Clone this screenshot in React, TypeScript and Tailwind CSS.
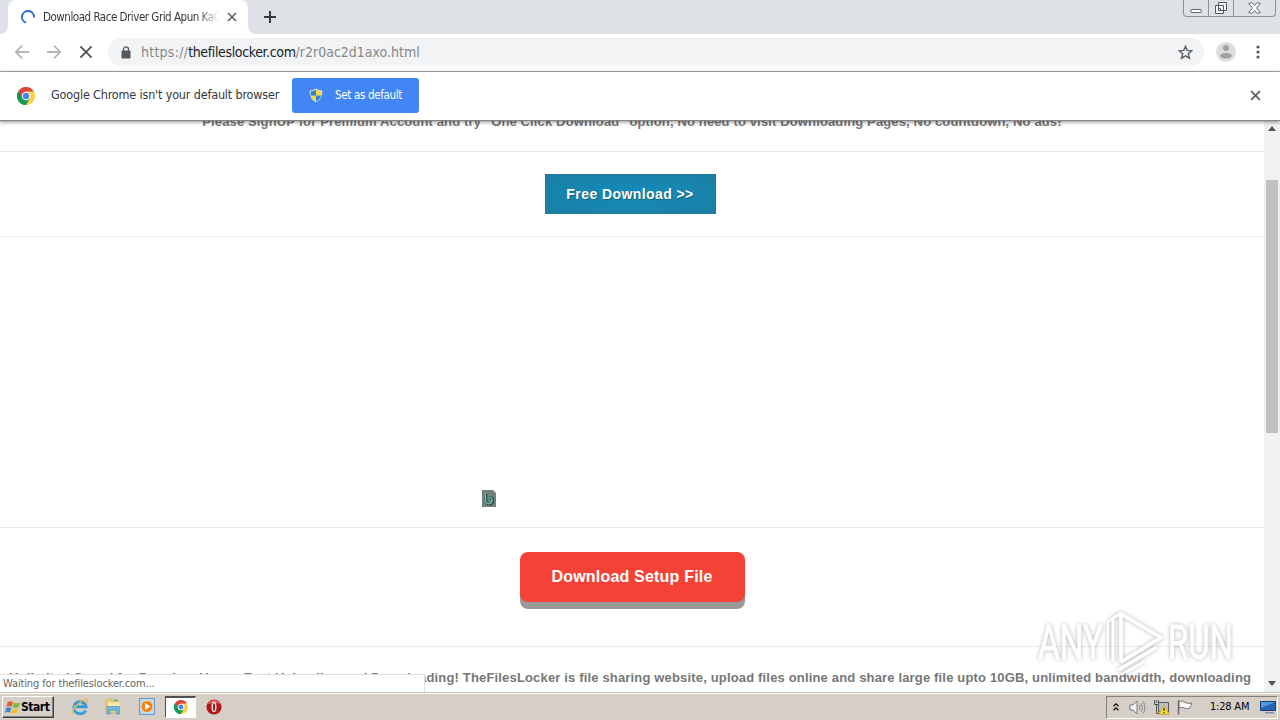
import React from "react";

const ChromeLogo: React.FC<{ size: number }> = ({ size }) => (
  <svg width={size} height={size} viewBox="0 0 18 18" aria-hidden="true">
    <path d="M9 9 L1.2 4.5 A9 9 0 0 1 16.8 4.5 Z" fill="#dc4437" />
    <path d="M9 9 L16.8 4.5 A9 9 0 0 1 9 18 Z" fill="#fdd04a" />
    <path d="M9 9 L9 18 A9 9 0 0 1 1.2 4.5 Z" fill="#159b58" />
    <path d="M9 4.5 H16.8 L13 11 Z" fill="#fdd04a" />
    <path d="M1.2 4.5 L5.1 11.2 L9 9 V4.5 Z" fill="#dc4437" />
    <path d="M1.2 4.5 L5.1 11.2 L9 13.5 L12.9 11.2 L9 18 A9 9 0 0 1 1.2 4.5" fill="#159b58" />
    <circle cx="9" cy="9" r="4.2" fill="#fff" />
    <circle cx="9" cy="9" r="3.2" fill="#4285f4" />
  </svg>
);

const Cross: React.FC<{ size: number; width: number; color: string }> = ({ size, width, color }) => (
  <svg width={size} height={size} viewBox="0 0 10 10" aria-hidden="true">
    <path d="M1 1 L9 9 M9 1 L1 9" stroke={color} strokeWidth={width} fill="none" />
  </svg>
);

const TabStrip = () => (
  <div className="flex h-[34px] shrink-0 items-start bg-[#dee1e6]">
    <div className="flex h-full w-2 items-end bg-white">
      <div className="h-full w-full rounded-br-lg bg-[#dee1e6]" />
    </div>
    <div className="flex h-full w-[240px] items-center rounded-t-lg bg-white pl-[13px]">
      <svg width="14" height="14" viewBox="0 0 14 14" aria-hidden="true">
        <path d="M5 12.7 A6 6 0 1 1 13 7.5" stroke="#3b70d9" strokeWidth="2.1" fill="none" />
      </svg>
      <div className="ml-2 w-[176px] overflow-hidden whitespace-nowrap bg-linear-to-r from-[#303236] from-88% to-white bg-clip-text text-[11.5px] leading-4 tracking-[-0.48px] text-transparent">
        Download Race Driver Grid Apun KaGames
      </div>
      <div className="ml-2">
        <Cross size={10} width={1.7} color="#5f6368" />
      </div>
    </div>
    <div className="h-full w-2 bg-white">
      <div className="h-full w-full rounded-bl-lg bg-[#dee1e6]" />
    </div>
    <svg className="mt-[10px] ml-[7px]" width="14" height="14" viewBox="0 0 14 14" aria-hidden="true">
      <path d="M7 1 V13 M1 7 H13" stroke="#35383d" strokeWidth="2" />
    </svg>
    <div className="ml-auto mr-1 flex h-[17px] w-[93px] rounded-b border border-t-0 border-[#8b9099]">
      <div className="flex w-[25px] items-end justify-center border-r border-[#8b9099] pb-[3px]">
        <div className="h-1 w-3 rounded-xs border border-[#62666e] bg-white" />
      </div>
      <div className="flex w-[25px] items-center justify-center border-r border-[#8b9099]">
        <svg width="14" height="14" viewBox="0 0 14 14" aria-hidden="true">
          <path d="M4.5 1.5 H12.5 V9.5 H4.5 Z M1.5 4.5 H9.5 V12.5 H1.5 Z" fill="#f3f4f6" stroke="#565a62" />
          <path d="M4.5 7.5 H6.5 V9.5 H4.5 Z" fill="#fff" stroke="#565a62" />
        </svg>
      </div>
      <div className="flex flex-1 items-center justify-center">
        <svg width="13" height="12" viewBox="0 0 13 12" aria-hidden="true">
          <path
            d="M1 1 H4.5 L6.5 3.5 L8.5 1 H12 V2 L8.5 6 L12 10 V11 H8.5 L6.5 8.5 L4.5 11 H1 V10 L4.5 6 L1 2 Z"
            fill="#fff"
            stroke="#666a72"
          />
        </svg>
      </div>
    </div>
  </div>
);

const Toolbar = () => (
  <div className="flex h-[38px] shrink-0 items-center border-b border-[#a9a9a9] bg-white pl-[14px]">
    <svg className="-mt-[2px]" width="16" height="16" viewBox="0 0 16 16" fill="none" stroke="#b4b6b9" strokeWidth="1.8" aria-hidden="true">
      <path d="M15 8 H2 M8 1.7 L1.8 8 L8 14.3" />
    </svg>
    <svg className="-mt-[2px] ml-4" width="16" height="16" viewBox="0 0 16 16" fill="none" stroke="#b4b6b9" strokeWidth="1.8" aria-hidden="true">
      <path d="M1 8 H14 M8 1.7 L14.2 8 L8 14.3" />
    </svg>
    <div className="-mt-[2px] ml-[17px]">
      <Cross size={14} width={1.3} color="#4e5156" />
    </div>
    <div className="-mt-px ml-[15px] flex h-7 w-[1096px] items-center rounded-full bg-[#f1f3f4] pl-[13px] pr-[11px]">
      <svg width="10" height="13" viewBox="0 0 10 13" aria-hidden="true">
        <rect x="0.5" y="4.5" width="9" height="8" rx="1" fill="#55585d" />
        <path d="M2.5 5 V3.4 A2.5 2.5 0 0 1 7.5 3.4 V5" stroke="#55585d" strokeWidth="1.3" fill="none" />
      </svg>
      <div className="ml-[10px] whitespace-nowrap text-[14px] leading-5 text-[#85888c]">
        <span className="tracking-[0.25px]">https://</span>
        <span className="tracking-[-0.36px] text-[#202124]">thefileslocker.com</span>
        <span className="tracking-[0px]">/r2r0ac2d1axo.html</span>
      </div>
      <svg className="ml-auto" width="15" height="15" viewBox="0 0 15 15" aria-hidden="true">
        <path
          d="M7.5 1.4 L9.2 5.4 L13.8 5.8 L10.3 8.8 L11.4 13.2 L7.5 10.9 L3.6 13.2 L4.7 8.8 L1.2 5.8 L5.8 5.4 Z"
          fill="none"
          stroke="#5f6368"
          strokeWidth="1.5"
        />
      </svg>
    </div>
    <svg className="-mt-[2px] ml-3" width="20" height="20" viewBox="0 0 20 20" aria-hidden="true">
      <circle cx="10" cy="10" r="10" fill="#dcdcdc" />
      <circle cx="10" cy="6" r="3" fill="#a0a0a0" />
      <ellipse cx="10" cy="13.8" rx="5.8" ry="2.8" fill="#a0a0a0" />
    </svg>
    <svg className="-mt-px ml-[20px]" width="4" height="14" viewBox="0 0 4 14" fill="#55585d" aria-hidden="true">
      <circle cx="2" cy="2" r="1.6" />
      <circle cx="2" cy="7" r="1.6" />
      <circle cx="2" cy="12" r="1.6" />
    </svg>
  </div>
);

const InfoBar = () => (
  <div className="relative z-10 flex h-[49px] shrink-0 items-center border-b border-[#858585] bg-white pb-px pl-[17px] shadow-[0_1px_4px_rgba(0,0,0,0.45)]">
    <ChromeLogo size={18} />
    <span className="ml-4 w-[241px] whitespace-nowrap text-[12.5px] tracking-[-0.17px] text-[#35373b]">
      Google Chrome isn't your default browser
    </span>
    <button className="flex h-[35px] w-[127px] items-center rounded-[3px] bg-[#4285f4] pl-[17px] text-white">
      <svg width="14" height="15" viewBox="0 0 14 15" aria-hidden="true">
        <path d="M7 0.5 Q9.5 2.4 13.3 2.4 Q13.8 10.5 7 14.5 Q0.2 10.5 0.7 2.4 Q4.5 2.4 7 0.5 Z" fill="#d7dde6" />
        <path d="M7 1.8 Q9 3.3 12.3 3.4 L12.1 7.5 H7 Z M7 7.5 V13.5 Q2.6 11 1.9 7.5 Z" fill="#fbd735" />
        <path d="M7 1.8 V7.5 H1.8 L1.7 3.4 Q5 3.3 7 1.8 Z M7 7.5 H12 Q11.5 11 7 13.5 Z" fill="#2f7fd0" />
      </svg>
      <span className="ml-3 whitespace-nowrap text-[11.5px] tracking-[-0.34px]">Set as default</span>
    </button>
    <div className="ml-auto mr-[19px]">
      <Cross size={11} width={1.7} color="#626468" />
    </div>
  </div>
);

const PageContent = () => (
  <main className="flex w-[1264px] flex-col overflow-hidden bg-white font-['Liberation_Sans',Arial,sans-serif]">
    <p className="h-[31px] shrink-0 whitespace-nowrap border-b border-[#e9e9e9] text-center text-[13px] leading-[15px] font-bold tracking-[0.14px] text-[#777]">
      <span className="-mt-[7px] block">
        Please SignUP for Premium Account and try "One Click Download" option, No need to visit Downloading Pages, No
        countdown, No ads!
      </span>
    </p>
    <section className="flex h-[85px] shrink-0 items-center border-b border-[#eee] pl-[545px]">
      <button className="h-10 w-[171px] border border-[#23799a] bg-radial from-[#128cbb] to-[#1b7fa3] pr-px text-[14px] font-bold tracking-[0.42px] text-white [text-shadow:1px_1px_1px_#17627e]">
        Free Download &gt;&gt;
      </button>
    </section>
    <section className="flex h-[291px] shrink-0 items-end border-b border-[#eaeaea] pb-5 pl-[482px]">
      <svg width="14" height="17" viewBox="0 0 14 17" aria-hidden="true">
        <path d="M0 0 H11 L14 3 V17 H0 Z" fill="#747f7d" />
        <path d="M4 3.5 V10.5 A3.5 3.5 0 1 0 7 7.3" stroke="#17504e" strokeWidth="2.6" fill="none" />
        <path d="M3.5 3 V10 A3.4 3.4 0 1 0 6.7 7" stroke="#78c4b9" strokeWidth="1.2" fill="none" />
      </svg>
    </section>
    <section className="flex h-[119px] shrink-0 justify-center border-b border-[#eaeaea] pt-6">
      <button className="h-[50px] w-[225px] rounded-lg bg-[#f44336] text-[16px] font-bold tracking-[0.2px] text-white shadow-[0_7px_0_#999]">
        Download Setup File
      </button>
    </section>
    <p className="shrink-0 whitespace-nowrap pt-[23px] pl-[9px] text-[13px] leading-[15px] font-bold tracking-[0.165px] text-[#777]">
      Unlimited Speed for Premium Users, Fast Uploading and Downloading! TheFilesLocker is file sharing website, upload
      files online and share large file upto 10GB, unlimited bandwidth, downloading
    </p>
  </main>
);

const Scrollbar = () => (
  <div className="flex w-4 flex-col items-center bg-[#f1f1f1]">
    <svg className="mt-[5px]" width="8" height="5" viewBox="0 0 8 5" aria-hidden="true">
      <path d="M0 5 L4 0 L8 5 Z" fill="#505050" />
    </svg>
    <div className="mt-[49px] h-[253px] w-3 bg-[#c1c1c1]" />
    <svg className="mt-auto mb-[6px]" width="8" height="5" viewBox="0 0 8 5" aria-hidden="true">
      <path d="M0 0 L4 5 L8 0 Z" fill="#505050" />
    </svg>
  </div>
);

const Watermark = () => (
  <svg
    className="absolute top-[605px] left-[1030px] z-20 opacity-80 drop-shadow-[0_0_2px_rgba(0,0,0,0.36)]"
    width="212"
    height="72"
    viewBox="0 0 212 72"
    aria-hidden="true"
  >
    <g fill="#fff" stroke="#fff" strokeWidth="0.8" fontFamily="Roboto, sans-serif" fontSize="49">
      <text x="8" y="54" textLength="65" lengthAdjust="spacingAndGlyphs">
        ANY
      </text>
      <text x="138" y="54" textLength="65" lengthAdjust="spacingAndGlyphs">
        RUN
      </text>
    </g>
    <g fill="none" stroke="#fff" strokeWidth="3.6">
      <path d="M91 57 V9 L131 32.5 L91 57" />
      <path d="M91 9 L83 13 V57" strokeWidth="3" />
      <path d="M83 13 L78 17 V53" strokeWidth="2" />
      <path d="M88 65 L127 42" strokeWidth="3.4" />
      <path d="M91 70 L115 56" strokeWidth="2.6" />
    </g>
  </svg>
);

const Taskbar = () => (
  <footer className="flex h-7 shrink-0 items-center border-t border-[#c3c1bd] bg-[#d6cfc8] shadow-[inset_0_1px_0_#fff]">
    <button className="ml-[2px] mt-px flex h-[22px] w-[52px] items-center border border-t-white border-r-[#404040] border-b-[#404040] border-l-white pl-[2px] shadow-[inset_-1px_-1px_0_#808080]">
      <svg width="16" height="15" viewBox="0 0 16 15" aria-hidden="true">
        <path d="M2.6 2.2 Q5 0.4 8 2 L6.7 6.7 Q4 5.4 1.3 6.8 Z" fill="#e5602b" />
        <path d="M9 2.4 Q12 4 15 2.4 L13.6 7.2 Q10.8 8.8 7.8 7.1 Z" fill="#7eb942" />
        <path d="M1 8 Q3.7 6.6 6.4 8 L5.1 12.6 Q2.5 11.3 0 12.7 Z" fill="#4288c9" />
        <path d="M7.4 8.4 Q10.2 10 13.2 8.4 L11.8 13 Q9 14.6 6.1 13 Z" fill="#f5bf30" />
      </svg>
      <span className="text-[12px] font-bold tracking-[-0.45px] text-black">Start</span>
    </button>

    <svg className="ml-[17px]" width="18" height="18" viewBox="0 0 18 18" fill="none" aria-hidden="true">
      <path d="M14.5 12.3 A6 6 0 1 1 15 8.8 H5" stroke="#369bd4" strokeWidth="3" />
      <path d="M14 11.7 A6 6 0 0 1 3.4 7" stroke="#8ed4f0" strokeWidth="1" />
      <path d="M2.7 15.6 Q-0.5 15 4.8 8.7 Q11 1.4 15.8 1.2 Q18 1.7 15.3 5" stroke="#e8bd3e" strokeWidth="1.3" />
    </svg>
    <svg className="ml-4" width="16" height="17" viewBox="0 0 16 17" aria-hidden="true">
      <path d="M1 3 L2 1 H6 L7 3 H13 V15 H1 Z" fill="#ecd27a" stroke="#cba946" strokeWidth="0.7" />
      <path d="M3 4.5 H14.5 V11 H3 Z" fill="#f8eaa8" />
      <path d="M2 8.5 H14.5 V16 H11.2 V12.3 H5.2 V16 H2 Z" fill="#6db8df" stroke="#468fbd" strokeWidth="0.6" />
      <path d="M9 2.2 H12.5" stroke="#49a851" strokeWidth="1.2" />
    </svg>
    <svg className="ml-[18px]" width="16" height="17" viewBox="0 0 16 17" aria-hidden="true">
      <rect x="0.5" y="0.5" width="15" height="16" fill="#b5d8ef" stroke="#6b9dc4" />
      <circle cx="8" cy="8.5" r="6" fill="#ef8317" stroke="#fff0d4" strokeWidth="0.7" />
      <path d="M6 5 L11.3 8.5 L6 12 Z" fill="#fff" />
    </svg>
    <div className="ml-[10px] flex h-[22px] w-[31px] items-center justify-center border border-t-2 border-[#4f4f4f] border-r-white border-b-white bg-white">
      <ChromeLogo size={14} />
    </div>
    <svg className="ml-[10px]" width="16" height="16" viewBox="0 0 16 16" aria-hidden="true">
      <circle cx="8" cy="8" r="7.6" fill="#b5161c" />
      <path d="M1.6 5.2 A7 7 0 0 1 14.4 5.2 Q8 2.8 1.6 5.2 Z" fill="#df6262" />
      <ellipse cx="8" cy="8" rx="2.5" ry="5.2" fill="#efe5e5" />
      <ellipse cx="8" cy="8" rx="1" ry="4" fill="#971218" />
    </svg>

    <div className="ml-auto mr-[2px] mt-px flex h-[23px] w-[172px] items-center border border-t-[#858179] border-r-white border-b-white border-l-[#858179] pl-[6px]">
      <svg width="6" height="8" viewBox="0 0 6 8" fill="none" stroke="#111" strokeWidth="1.3" aria-hidden="true">
        <path d="M0.5 3.3 L3 0.9 L5.5 3.3 M0.5 7.3 L3 4.9 L5.5 7.3" />
      </svg>
      <svg className="ml-[10px]" width="17" height="15" viewBox="0 0 17 15" fill="none" aria-hidden="true">
        <path d="M1 5 H4 L8 1 V14 L4 10 H1 Z" fill="#f7f7f7" stroke="#777" />
        <path d="M10.3 5 Q11.7 7.5 10.3 10 M12.3 3.3 Q14.7 7.5 12.3 11.7 M14.3 1.7 Q17.5 7.5 14.3 13.3" stroke="#858585" />
      </svg>
      <svg className="ml-[7px]" width="17" height="16" viewBox="0 0 17 16" aria-hidden="true">
        <path d="M5.5 3.5 H15.5 V13 H5.5 Z" fill="#bac0c6" stroke="#55595e" />
        <path d="M1.5 1 V5.5 H5.5 V1 M3.5 1 V4 M3.5 5.5 V14.5 H8" fill="none" stroke="#555" />
        <path d="M11 6.5 L16.3 15.3 H5.7 Z" fill="#f9de28" stroke="#c39e12" strokeWidth="0.7" />
        <path d="M11 9 V12 M11 13 V14.2" stroke="#333" strokeWidth="1.3" />
      </svg>
      <svg className="ml-[7px]" width="16" height="15" viewBox="0 0 16 15" aria-hidden="true">
        <path d="M2 1 Q6 0.5 8 2.5 Q11 4 15 3 L12.5 8.5 Q9 9.3 7 7.8 Q4.5 7 2 8 Z" fill="#f9f9f9" stroke="#777" />
        <path d="M1.5 0.5 V14.5" stroke="#6a6a6a" strokeWidth="1.5" />
      </svg>
      <span className="ml-[17px] w-[41px] whitespace-nowrap text-[11px] tracking-[-0.2px] text-black">1:28 AM</span>
      <svg className="ml-[9px]" width="16" height="13" viewBox="0 0 16 13" aria-hidden="true">
        <path d="M0.5 0.5 H15.5 V9.5 H0.5 Z" fill="#2565b5" stroke="#183f76" />
        <path d="M1 1 H15 L1 7 Z" fill="#5795dd" />
        <path d="M5 11 H14 V12.5 H5 Z" fill="#7795b4" />
      </svg>
    </div>
  </footer>
);

export default function App() {
  return (
    <div className="relative flex h-[720px] w-[1280px] flex-col overflow-hidden bg-white font-['DejaVu_Sans_Condensed','DejaVu_Sans',sans-serif]">
      <TabStrip />
      <Toolbar />
      <InfoBar />
      <div className="flex min-h-0 flex-1">
        <PageContent />
        <Scrollbar />
      </div>
      <Taskbar />
      <div className="absolute top-[674px] left-0 h-[18px] w-[425px] border-t border-r border-[#dedede] bg-white pl-[3px] text-[11px] leading-[17px] tracking-[-0.13px] text-[#666]">
        Waiting for thefileslocker.com...
      </div>
      <Watermark />
    </div>
  );
}
